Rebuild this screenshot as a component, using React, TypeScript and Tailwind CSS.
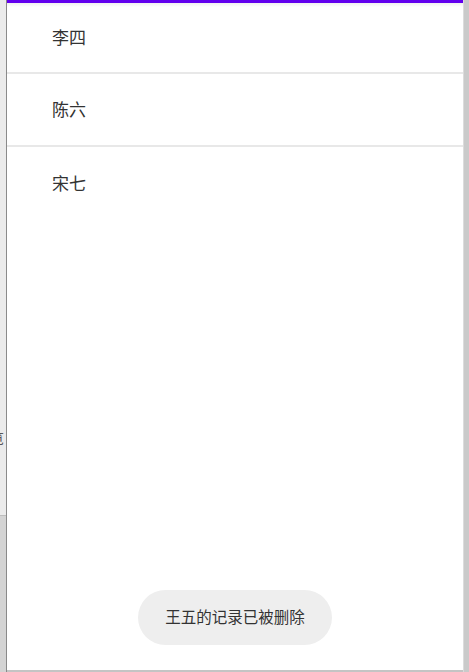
export default function App() {
  const names = ["李四", "陈六", "宋七"];

  return (
    <div
      className="flex h-[672px] w-[469px] overflow-hidden bg-white"
      style={{ fontFamily: '"Noto Sans", "Noto Sans CJK SC", sans-serif' }}
    >
      {/* left edge of the page behind */}
      <div className="flex w-[6px] flex-col bg-[#ebebeb]">
        <div className="flex flex-1 flex-col overflow-hidden">
          <div className="h-[428px]" />
          <div className="-ml-[10px] text-[14px] leading-[20px] text-[#555]">览</div>
        </div>
        <div className="h-[157px] border-t border-[#bdbdbd] bg-[#d4d4d4]" />
      </div>

      {/* dialog panel */}
      <div className="relative flex flex-1 flex-col border-x border-[#8a8a8a] border-r-[#dcdcdc] bg-white">
        <div className="h-[3px] bg-[#6200ee]" />
        <div className="h-[4px] bg-gradient-to-b from-[#f0f0f0] to-white" />
        <ul className="flex flex-col">
          {names.map((name, i) => (
            <li
              key={name}
              className={`flex h-[73px] items-center pl-[45px] text-[17px] text-[#333333] ${
                i < names.length - 1 ? "border-b-2 border-[#e8e8e8]" : ""
              } ${i === 0 ? "-mt-[7px] pt-[4px] h-[74px]" : ""}`}
            >
              {name}
            </li>
          ))}
        </ul>
        <div className="flex-1" />
        <div className="flex justify-center pb-[25px]">
          <div className="flex h-[55px] w-[194px] items-center justify-center rounded-full bg-[#eeeeee] text-[15.5px] text-[#333333]">
            王五的记录已被删除
          </div>
        </div>
        <div className="h-[2px] bg-[#c4c4c4]" />
      </div>

      {/* right scrollbar strip */}
      <div className="w-[5px] bg-[#cacaca]" />
    </div>
  );
}
